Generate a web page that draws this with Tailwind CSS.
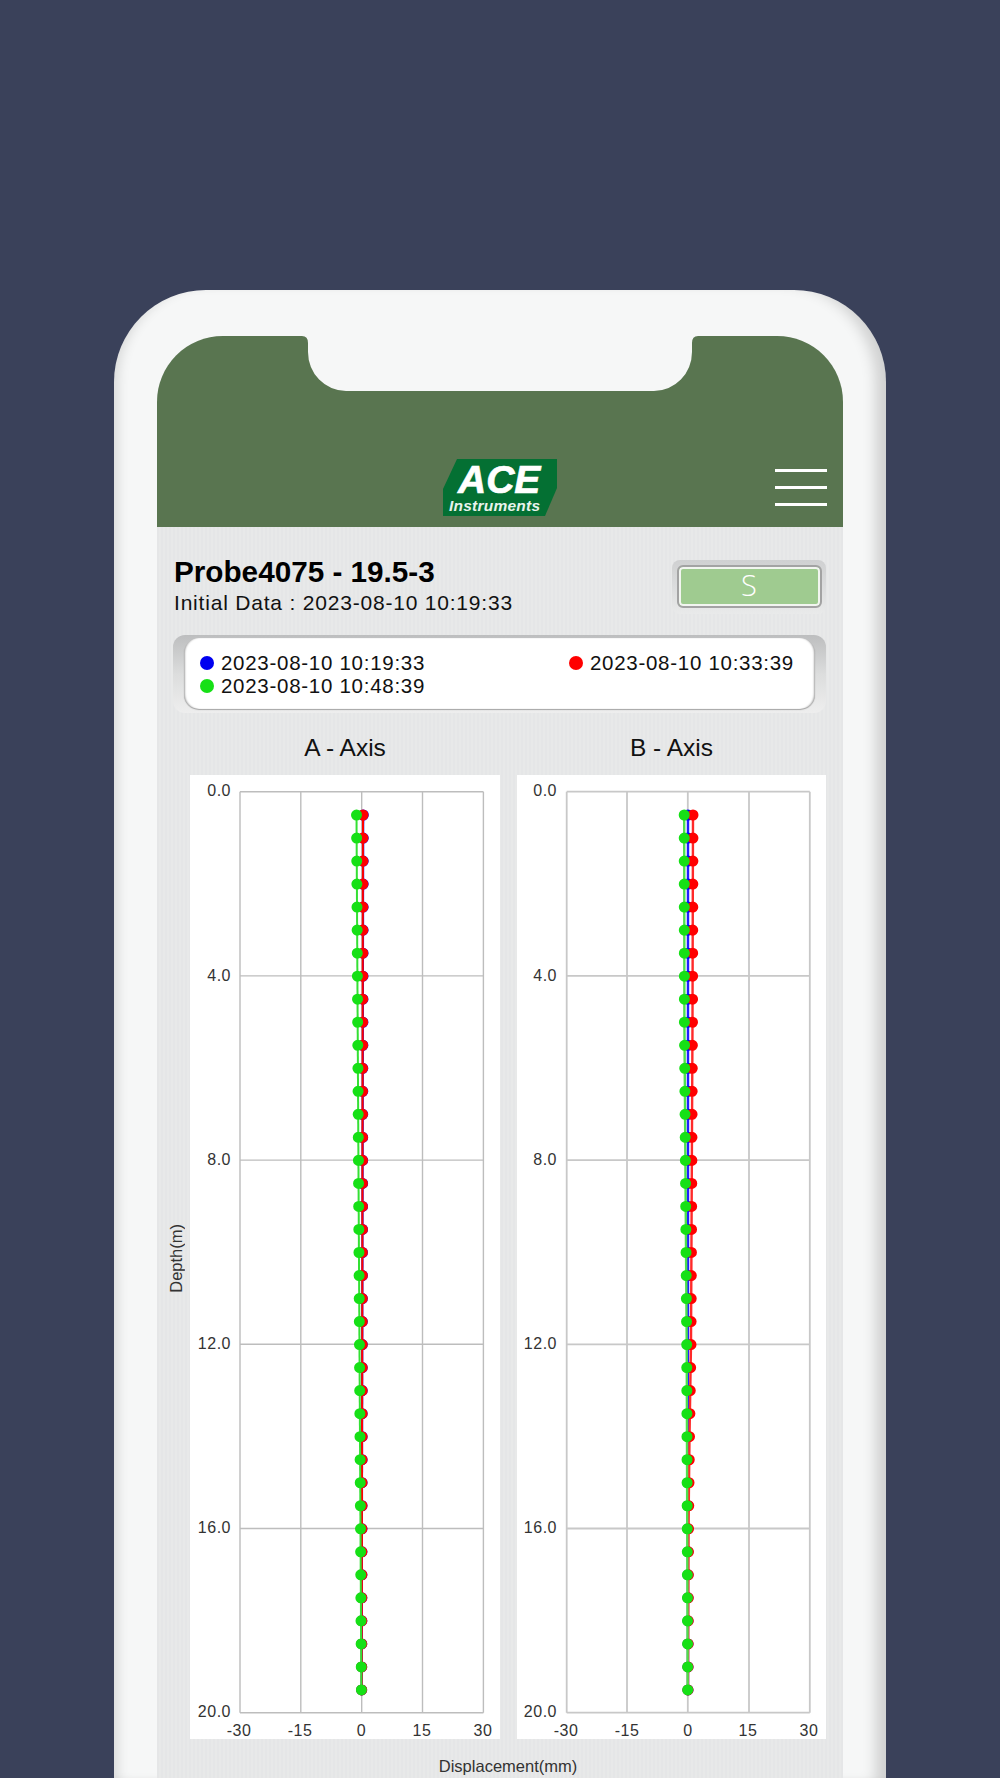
<!DOCTYPE html>
<html lang="en">
<head>
<meta charset="utf-8">
<title>Probe4075</title>
<script src="https://cdn.jsdelivr.net/npm/@tailwindcss/browser@4"></script>
</head>
<body class="bg-[#3a415a]">
<div class="h-[1778px] overflow-hidden pt-[290px] pl-[114px] font-['Liberation_Sans',Arial,sans-serif] text-[#111]">
  <!-- phone frame -->
  <div class="relative w-[772px] h-[1488px] rounded-t-[92px] bg-[#f6f7f7] pt-[46px] pl-[43px] shadow-[inset_12px_0_12px_-8px_rgba(0,0,0,0.12),inset_-18px_0_14px_-8px_rgba(0,0,0,0.16)]">
    <div class="w-[686px] h-[1442px] rounded-t-[66px] overflow-hidden bg-[repeating-linear-gradient(90deg,#e5e6e7_0px,#e5e6e7_2px,#e8e9e9_2px,#e8e9e9_4px)]">
      <!-- header -->
      <header class="relative h-[191px] bg-[#597550] flex items-end justify-center pb-[11px]">
        <svg class="absolute left-[145px] top-0" width="396" height="56" viewBox="302 336 396 56" aria-hidden="true">
          <path d="M302 336 Q308 336 308 343 V352 A38 39 0 0 0 346 391 H654 A38 39 0 0 0 692 352 V343 Q692 336 698 336 Z" fill="#f6f7f7"/>
        </svg>
        <svg width="114" height="57" viewBox="443 459 114 57" role="img" aria-label="ACE Instruments">
          <polygon points="457,459 557,459 557,488 545,516 443,516 443,489" fill="#047033"/>
          <text x="458" y="493" fill="#fff" stroke="#fff" stroke-width="0.7" font-size="39" font-weight="700" font-style="italic" font-family="Liberation Sans">ACE</text>
          <text x="449" y="510.5" fill="#e9f3ec" font-size="15.5" font-weight="700" font-style="italic" font-family="Liberation Sans" textLength="91" lengthAdjust="spacing">Instruments</text>
        </svg>
        <div class="absolute right-[16px] bottom-[21px] w-[52px] flex flex-col gap-[14px]">
          <span class="block h-[3px] bg-white"></span>
          <span class="block h-[3px] bg-white"></span>
          <span class="block h-[3px] bg-white"></span>
        </div>
      </header>

      <!-- title row -->
      <section class="pt-[29px] pl-[17px] pr-[17px] flex items-center justify-between">
        <div>
          <h1 class="text-[29.7px] leading-[31px] font-bold text-black">Probe4075 - 19.5-3</h1>
          <p class="text-[21px] leading-[31px] tracking-[0.8px]">Initial Data : 2023-08-10 10:19:33</p>
        </div>
        <div class="w-[154px] h-[54px] rounded-[8px] bg-linear-to-b from-[#cfd0d1] to-[#e9eaea] flex items-start justify-center pt-[5px]">
          <button class="w-[145px] h-[43px] rounded-[6px] border-2 border-[#a3a3a3] bg-[#9fcb90] shadow-[inset_0_0_0_2px_#f2f5f0] text-white text-[29px] leading-none pb-[4px] font-['Open_Sans',sans-serif] font-light">S</button>
        </div>
      </section>

      <!-- legend -->
      <section class="mt-[17px] ml-[16px] w-[653px] h-[78px] rounded-[12px] bg-linear-to-b from-[#bdbebf] via-[#dcdddd] to-[#eeeeee] pt-[3px] pl-[11px]">
        <div class="w-[631px] h-[71px] rounded-[15px] bg-white shadow-[inset_2px_0_2px_-1px_rgba(0,0,0,0.35),inset_-2px_0_2px_-1px_rgba(0,0,0,0.35),0_1px_1px_rgba(0,0,0,0.3)] pt-[13px] pl-[16px] pr-[21px] flex flex-wrap justify-between content-start text-[20.5px] leading-[23px] tracking-[0.72px]">
          <div class="flex items-center gap-[7px]"><span class="w-[14px] h-[14px] rounded-full bg-[#0000f0]"></span>2023-08-10 10:19:33</div>
          <div class="flex items-center gap-[7px]"><span class="w-[14px] h-[14px] rounded-full bg-[#ff0000]"></span>2023-08-10 10:33:39</div>
          <div class="basis-full flex items-center gap-[7px]"><span class="w-[14px] h-[14px] rounded-full bg-[#16e016]"></span>2023-08-10 10:48:39</div>
        </div>
      </section>

      <!-- charts -->
      <section class="flex">
        <div class="w-[33px] pl-[4px] pt-[26px] flex items-center justify-center">
          <span class="[writing-mode:vertical-rl] rotate-180 text-[16.5px] leading-[18px] text-[#333]">Depth(m)</span>
        </div>
        <div>
          <div class="grid grid-cols-[310px_309px] gap-x-[17px]">
            <h2 class="h-[62px] pt-[8px] flex items-center justify-center text-[24.5px] font-normal text-[#111]">A - Axis</h2>
            <h2 class="h-[62px] pt-[8px] flex items-center justify-center text-[24.5px] font-normal text-[#111]">B - Axis</h2>

            <svg class="bg-white block" width="310" height="964" viewBox="190 775 310 964" font-family="Liberation Sans" font-size="16" letter-spacing="0.5" fill="#333">
              <g stroke="#bdbdbd" stroke-width="1.4" fill="none">
                <path d="M240 791.7V1712.7M300.8 791.7V1712.7M361.7 791.7V1712.7M422.5 791.7V1712.7M483.4 791.7V1712.7"/>
                <path d="M240 791.7H483.4M240 975.9H483.4M240 1160.1H483.4M240 1344.3H483.4M240 1528.5H483.4M240 1712.7H483.4"/>
              </g>
              <g text-anchor="end">
                <text x="231" y="796">0.0</text><text x="231" y="981">4.0</text><text x="231" y="1165">8.0</text><text x="231" y="1349">12.0</text><text x="231" y="1533">16.0</text><text x="231" y="1717">20.0</text>
              </g>
              <g text-anchor="middle">
                <text x="239" y="1736">-30</text><text x="300" y="1736">-15</text><text x="361.5" y="1736">0</text><text x="422" y="1736">15</text><text x="483" y="1736">30</text>
              </g>
              <g fill="none">
                <path d="M363.3 815L361.7 1690.5" stroke="#0000ff" stroke-width="2"/>
                <path d="M363.3 815L361.7 1690.5" stroke="#0000ff" stroke-width="11" stroke-linecap="round" stroke-dasharray="0.01 23.015"/>
                <path d="M363 815L361.7 1690.5" stroke="#ff0000" stroke-width="2"/>
                <path d="M363 815L361.7 1690.5" stroke="#ff0000" stroke-width="11" stroke-linecap="round" stroke-dasharray="0.01 23.015"/>
                <path d="M356.5 815L361.4 1690.5" stroke="#34e034" stroke-width="2"/>
                <path d="M356.5 815L361.4 1690.5" stroke="#16e016" stroke-width="11" stroke-linecap="round" stroke-dasharray="0.01 23.015"/>
              </g>
            </svg>

            <svg class="bg-white block" width="309" height="964" viewBox="517 775 309 964" font-family="Liberation Sans" font-size="16" letter-spacing="0.5" fill="#333">
              <g stroke="#c8c8c8" stroke-width="1.8" fill="none">
                <path d="M566.7 791.7V1712.7M627 791.7V1712.7M687.8 791.7V1712.7M749 791.7V1712.7M809.8 791.7V1712.7"/>
                <path d="M566.7 791.7H809.8M566.7 975.9H809.8M566.7 1160.1H809.8M566.7 1344.3H809.8M566.7 1528.5H809.8M566.7 1712.7H809.8"/>
              </g>
              <g text-anchor="end">
                <text x="557" y="796">0.0</text><text x="557" y="981">4.0</text><text x="557" y="1165">8.0</text><text x="557" y="1349">12.0</text><text x="557" y="1533">16.0</text><text x="557" y="1717">20.0</text>
              </g>
              <g text-anchor="middle">
                <text x="566" y="1736">-30</text><text x="627" y="1736">-15</text><text x="688" y="1736">0</text><text x="748" y="1736">15</text><text x="809" y="1736">30</text>
              </g>
              <g fill="none">
                <path d="M688 815L688 1690.5" stroke="#2020ff" stroke-width="2.4"/>
                <path d="M688 815L688 1690.5" stroke="#0000ff" stroke-width="11" stroke-linecap="round" stroke-dasharray="0.01 23.015"/>
                <path d="M693 815L692.5 1023L691 1344L689.5 1437L688.5 1530L688 1690.5" stroke="#ff2a2a" stroke-width="2.4"/>
                <path d="M693 815L692.5 1023L691 1344L689.5 1437L688.5 1530L688 1690.5" stroke="#ff0000" stroke-width="11" stroke-linecap="round" stroke-dasharray="0.01 23.015"/>
                <path d="M684.2 815L684.4 1023L686.7 1344L687.7 1690.5" stroke="#4ee04e" stroke-width="2.4"/>
                <path d="M684.2 815L684.4 1023L686.7 1344L687.7 1690.5" stroke="#16e016" stroke-width="11" stroke-linecap="round" stroke-dasharray="0.01 23.015"/>
              </g>
            </svg>
          </div>
          <p class="pt-[16px] text-center text-[16.5px] leading-[22px] text-[#333]">Displacement(mm)</p>
        </div>
      </section>
    </div>
  </div>
</div>
</body>
</html>
